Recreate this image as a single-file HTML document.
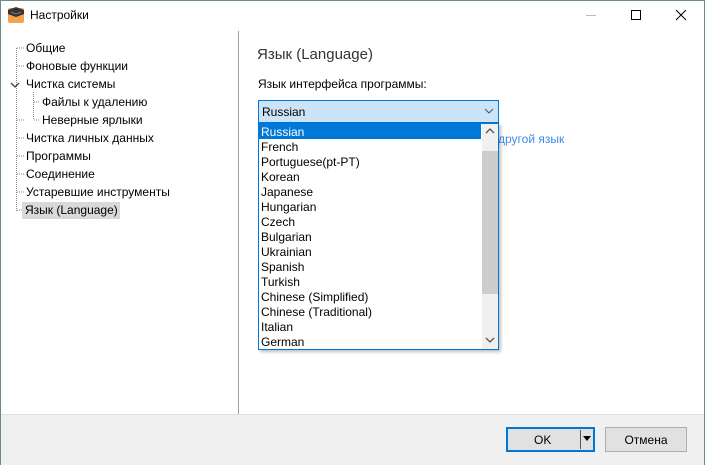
<!DOCTYPE html>
<html><head><meta charset="utf-8"><style>
*{margin:0;padding:0;box-sizing:border-box}
body{width:706px;height:465px;overflow:hidden;background:#fff;font-family:"Segoe UI","Liberation Sans","DejaVu Sans",sans-serif;font-size:12px;color:#000;position:relative}
.a{position:absolute;white-space:nowrap}
.win{position:absolute;left:0;top:0;width:705px;height:465px;border:1px solid #6d8a88;border-bottom:none;background:#fff}
.tree div{position:absolute;left:26px;height:17px;line-height:17px;white-space:nowrap}
.li{position:absolute;left:259px;width:222px;height:15px;line-height:16px;padding-left:2px;white-space:nowrap}
</style></head><body>
<div class="win"></div>
<svg class="a" style="left:7px;top:6px" width="18" height="18"><rect x="1" y="2" width="16" height="15" rx="2" fill="#f5a04a"/><path d="M1 4 L9 1 L17 4 L17 8 L9 11 L1 8Z" fill="#333"/><path d="M4 6 L9 8 L14 6" stroke="#777" fill="none"/></svg>
<div class="a" style="left:30px;top:8px;font-size:12px">Настройки</div>
<div class="a" style="left:586px;top:15px;width:10px;height:1px;background:#bbb"></div>
<div class="a" style="left:631px;top:10px;width:10px;height:10px;border:1px solid #000"></div>
<svg class="a" style="left:675px;top:9px" width="12" height="12"><path d="M1 1L11 11M11 1L1 11" stroke="#000" stroke-width="1"/></svg>
<div class="a" style="left:238px;top:31px;width:1px;height:383px;background:#a0a0a0"></div>
<svg class="a" style="left:0;top:40px" width="40" height="180">
<g stroke="#888" stroke-dasharray="1 1" fill="none">
<path d="M16.5 8V171"/><path d="M17 8H25M17 26H25M17 80H25M17 98H25M17 116H25M17 134H25M17 152H25M17 170H25"/>
<path d="M33.5 52V80"/><path d="M34 62H40M34 80H40"/></g>
<path d="M11 43 L15 47 L19 43" stroke="#444" stroke-width="1.3" fill="none"/></svg>
<div class="tree">
<div style="top:40px">Общие</div>
<div style="top:58px">Фоновые функции</div>
<div style="top:76px">Чистка системы</div>
<div style="top:94px;left:42px">Файлы к удалению</div>
<div style="top:112px;left:42px">Неверные ярлыки</div>
<div style="top:130px">Чистка личных данных</div>
<div style="top:148px">Программы</div>
<div style="top:166px">Соединение</div>
<div style="top:184px">Устаревшие инструменты</div>
<div style="top:202px;left:22px;background:#d9d9d9;padding:0 3px;width:98px">Язык (Language)</div>
</div>
<div class="a" style="left:257px;top:46px;font-size:15px;color:#333">Язык (Language)</div>
<div class="a" style="left:258px;top:77px">Язык интерфейса программы:</div>
<div class="a" style="left:258px;top:100px;width:241px;height:23px;background:#cce4f7;border:1px solid #0078d7;padding-left:3px;line-height:23px">Russian</div>
<svg class="a" style="left:484px;top:107px" width="10" height="8"><path d="M1 2L5 6L9 2" stroke="#555" fill="none"/></svg>
<div class="a" style="left:498px;top:132px;color:#3b8ee8">другой язык</div>
<div class="a" style="left:258px;top:123px;width:241px;height:227px;border:1px solid #0078d7;background:#fff;box-shadow:2px 2px 3px rgba(0,0,0,.25)"></div>
<div class="a" style="left:482px;top:124px;width:16px;height:225px;background:#f0f0f0"></div>
<div class="a" style="left:482px;top:151px;width:16px;height:143px;background:#cdcdcd"></div>
<svg class="a" style="left:485px;top:127px" width="10" height="8"><path d="M1 6L5 2L9 6" stroke="#555" stroke-width="1.3" fill="none"/></svg>
<svg class="a" style="left:485px;top:336px" width="10" height="8"><path d="M1 2L5 6L9 2" stroke="#555" stroke-width="1.3" fill="none"/></svg>
<div class="li" style="top:124px;background:#0078d7;color:#fff">Russian</div>
<div class="li" style="top:139px">French</div>
<div class="li" style="top:154px">Portuguese(pt-PT)</div>
<div class="li" style="top:169px">Korean</div>
<div class="li" style="top:184px">Japanese</div>
<div class="li" style="top:199px">Hungarian</div>
<div class="li" style="top:214px">Czech</div>
<div class="li" style="top:229px">Bulgarian</div>
<div class="li" style="top:244px">Ukrainian</div>
<div class="li" style="top:259px">Spanish</div>
<div class="li" style="top:274px">Turkish</div>
<div class="li" style="top:289px">Chinese (Simplified)</div>
<div class="li" style="top:304px">Chinese (Traditional)</div>
<div class="li" style="top:319px">Italian</div>
<div class="li" style="top:334px">German</div>
<div class="a" style="left:1px;top:414px;width:703px;height:51px;background:#f0f0f0;border-top:1px solid #dfdfdf"></div>
<div class="a" style="left:506px;top:427px;width:89px;height:25px;border:2px solid #0078d7;background:#e1e1e1"></div>
<div class="a" style="left:534px;top:433px">OK</div>
<div class="a" style="left:580px;top:430px;width:1px;height:19px;background:#555"></div>
<svg class="a" style="left:583px;top:436px" width="9" height="6"><path d="M0 0H8L4 5Z" fill="#000"/></svg>
<div class="a" style="left:605px;top:427px;width:82px;height:25px;border:1px solid #adadad;background:#e1e1e1;text-align:center;line-height:25px">Отмена</div>
</body></html>
